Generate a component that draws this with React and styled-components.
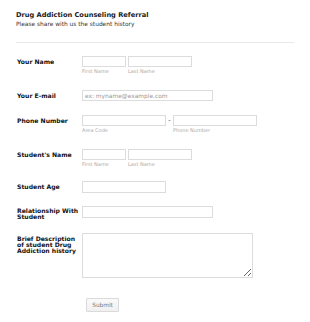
import React from "react";
import styled, { createGlobalStyle } from "styled-components";

const Global = createGlobalStyle`
  html, body { margin: 0; padding: 0; background: #fff; }
  body { font-family: "DejaVu Sans", Verdana, sans-serif; }
  * { box-sizing: border-box; }
`;

const Page = styled.div`
  width: 310px;
  height: 322px;
  padding: 0 16px;
  overflow: hidden;
`;

const Header = styled.div`
  padding-top: 11px;
  padding-bottom: 14px;
  border-bottom: 1px solid #e8e8e8;
`;

const Title = styled.h1`
  margin: 0;
  font-size: 6.65px;
  line-height: 9px;
  font-weight: bold;
  color: #1a1a1a;
`;

const Subtitle = styled.div`
  font-size: 5.9px;
  line-height: 8px;
  color: #333;
`;

const Form = styled.div`
  padding-top: 13px;
`;

const Row = styled.div`
  display: flex;
  align-items: flex-start;
  margin-bottom: ${(p) => p.$gap ?? 14}px;
`;

const Label = styled.label`
  width: 66px;
  flex: none;
  padding-left: 1px;
  padding-top: ${(p) => p.$top ?? 3}px;
  font-size: 6.1px;
  line-height: 6px;
  font-weight: bold;
  color: #111;
`;

const Fields = styled.div`
  display: flex;
  align-items: flex-start;
  gap: ${(p) => p.$gap ?? 2}px;
`;

const Field = styled.div`
  display: flex;
  flex-direction: column;
`;

const Input = styled.input`
  display: block;
  width: ${(p) => p.$w}px;
  height: ${(p) => p.$h ?? 11}px;
  margin: 0;
  padding: 0 2px;
  border: 1px solid #dcdcdc;
  border-radius: 0;
  background: #fff;
  font-family: "DejaVu Sans", Verdana, sans-serif;
  font-size: 5.9px;
  color: #333;
  outline: none;
  &::placeholder { color: #999; }
`;

const TextArea = styled.textarea`
  display: block;
  width: ${(p) => p.$w}px;
  height: ${(p) => p.$h}px;
  margin: 0;
  padding: 2px;
  border: 1px solid #dcdcdc;
  border-radius: 0;
  font-family: "DejaVu Sans", Verdana, sans-serif;
  font-size: 5.9px;
  resize: both;
  outline: none;
`;

const Sub = styled.span`
  margin-top: 1px;
  font-size: 5px;
  line-height: 7px;
  color: #aaa;
`;

const Dash = styled.span`
  font-size: 6.5px;
  line-height: 11px;
  color: #333;
  width: 7px;
  text-align: center;
`;

const SubmitRow = styled.div`
  padding-left: 70px;
  padding-top: 20px;
`;

const Button = styled.button`
  display: block;
  width: 33px;
  height: 14px;
  padding: 0;
  border: 1px solid #dadada;
  border-radius: 1px;
  background: linear-gradient(#fafafa, #f0f0f0);
  font-family: "DejaVu Sans", Verdana, sans-serif;
  font-size: 5.8px;
  color: #777;
`;

export default function App() {
  return (
    <Page>
      <Global />
      <Header>
        <Title>Drug Addiction Counseling Referral</Title>
        <Subtitle>Please share with us the student history</Subtitle>
      </Header>
      <Form>
        <Row $gap={15}>
          <Label>Your Name</Label>
          <Fields>
            <Field>
              <Input $w={44} />
              <Sub>First Name</Sub>
            </Field>
            <Field>
              <Input $w={64} />
              <Sub>Last Name</Sub>
            </Field>
          </Fields>
        </Row>
        <Row>
          <Label>Your E-mail</Label>
          <Input $w={131} placeholder="ex: myname@example.com" />
        </Row>
        <Row $gap={15}>
          <Label>Phone Number</Label>
          <Fields $gap={0}>
            <Field>
              <Input $w={84} />
              <Sub>Area Code</Sub>
            </Field>
            <Dash>-</Dash>
            <Field>
              <Input $w={84} />
              <Sub>Phone Number</Sub>
            </Field>
          </Fields>
        </Row>
        <Row $gap={13}>
          <Label>Student's Name</Label>
          <Fields>
            <Field>
              <Input $w={44} />
              <Sub>First Name</Sub>
            </Field>
            <Field>
              <Input $w={64} />
              <Sub>Last Name</Sub>
            </Field>
          </Fields>
        </Row>
        <Row $gap={13}>
          <Label>Student Age</Label>
          <Input $w={84} $h={12} />
        </Row>
        <Row $gap={13}>
          <Label $top={2}>Relationship With Student</Label>
          <Input $w={131} $h={12} />
        </Row>
        <Row $gap={0}>
          <Label $top={3}>Brief Description of student Drug Addiction history</Label>
          <TextArea $w={171} $h={45} />
        </Row>
        <SubmitRow>
          <Button>Submit</Button>
        </SubmitRow>
      </Form>
    </Page>
  );
}
